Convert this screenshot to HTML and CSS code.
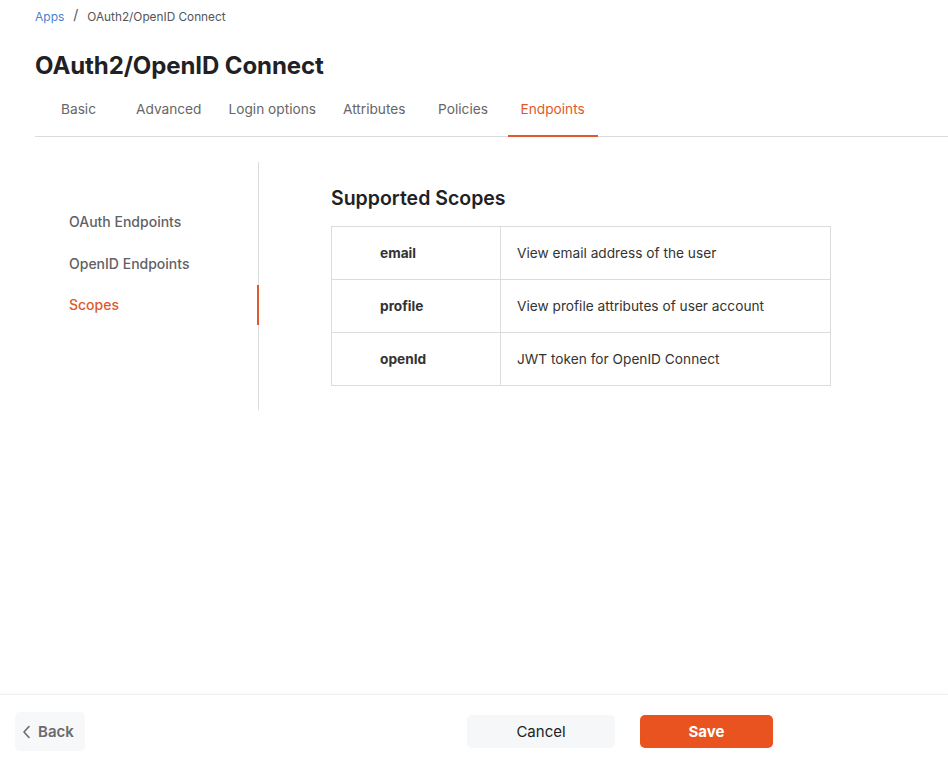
FILE: index.html
```html
<!DOCTYPE html>
<html lang="en">
<head>
<meta charset="utf-8">
<title>OAuth2/OpenID Connect</title>
<link rel="stylesheet" href="styles.css">
</head>
<body>
<div class="page">
  <main class="main">
    <nav class="breadcrumb">
      <a class="crumb-link" href="#">Apps</a>
      <span class="crumb-sep">/</span>
      <span class="crumb-current">OAuth2/OpenID Connect</span>
    </nav>
    <h1 class="title">OAuth2/OpenID Connect</h1>
    <div class="tabs">
      <div class="tab">Basic</div>
      <div class="tab">Advanced</div>
      <div class="tab">Login options</div>
      <div class="tab">Attributes</div>
      <div class="tab">Policies</div>
      <div class="tab tab-active">Endpoints</div>
    </div>
    <div class="body">
      <aside class="sidenav">
        <div class="side-item">OAuth Endpoints</div>
        <div class="side-item">OpenID Endpoints</div>
        <div class="side-item side-active">Scopes</div>
      </aside>
      <section class="content">
        <h2 class="section-title">Supported Scopes</h2>
        <table class="scopes">
          <tr><td class="scope-name">email</td><td class="scope-desc">View email address of the user</td></tr>
          <tr><td class="scope-name">profile</td><td class="scope-desc">View profile attributes of user account</td></tr>
          <tr><td class="scope-name">openId</td><td class="scope-desc">JWT token for OpenID Connect</td></tr>
        </table>
      </section>
    </div>
  </main>
  <footer class="footer">
    <button class="btn-back">
      <svg class="back-icon" width="10" height="14" viewBox="0 0 10 14"><path d="M7 1.5 L2 7 L7 12.5" fill="none" stroke="#6b6b6b" stroke-width="1.6" stroke-linecap="round" stroke-linejoin="round"/></svg>
      Back
    </button>
    <div class="footer-actions">
      <button class="btn-cancel">Cancel</button>
      <button class="btn-save">Save</button>
    </div>
  </footer>
</div>
</body>
</html>
```
FILE: styles.css
```css
* { box-sizing: border-box; }
html, body { margin: 0; padding: 0; }
body {
  font-family: Inter, "Liberation Sans", sans-serif;
  color: #222;
  background: #fff;
}
.page {
  height: 762px;
  display: flex;
  flex-direction: column;
}
.main {
  flex: 1;
  padding-left: 35px;
}
.breadcrumb {
  display: flex;
  align-items: center;
  height: 33px;
  font-size: 12px;
}
.crumb-link {
  color: #4a7fd0;
  text-decoration: none;
  font-size: 12px;
}
.crumb-sep {
  color: #555;
  margin: 0 9px 0 9px;
  font-size: 14px;
  position: relative;
  top: -2px;
}
.crumb-current {
  color: #555;
  font-size: 11.8px;
}
.title {
  margin: 0;
  margin-top: 19px;
  font-size: 24px;
  font-weight: 700;
  color: #1f2125;
  line-height: 28px;
  letter-spacing: -0.1px;
}
.tabs {
  display: flex;
  gap: 1px;
  margin-top: 19px;
  border-bottom: 1px solid #dcdcdc;
  height: 38px;
}
.tab {
  min-width: 87px;
  padding: 0 13px;
  text-align: center;
  font-size: 13.7px;
  color: #666;
  line-height: 20px;
  border-bottom: 2px solid transparent;
  height: 38px;
}
.tab-active {
  color: #de5a2c;
  border-bottom: 2.5px solid #de5a2c;
}
.body {
  display: flex;
  padding-top: 25px;
}
.sidenav {
  width: 224px;
  height: 248px;
  border-right: 1px solid #dcdcdc;
  padding-top: 40px;
  padding-left: 34px;
}
.side-item {
  font-size: 14px;
  font-weight: 500;
  color: #5f6165;
  height: 41.5px;
  line-height: 40px;
  position: relative;
}
.side-active {
  color: #de5a2c;
}
.side-active::after {
  content: "";
  position: absolute;
  right: 0;
  top: 0;
  width: 2.5px;
  height: 40px;
  background: #de5a2c;
  margin-right: -1px;
}
.content {
  padding-left: 72px;
  padding-top: 24px;
}
.section-title {
  margin: 0 0 16px 0;
  font-size: 19.5px;
  font-weight: 600;
  color: #1f2125;
  line-height: 24px;
}
.scopes {
  border-collapse: collapse;
  width: 500px;
}
.scopes td {
  border: 1px solid #dcdcdc;
  height: 53px;
  font-size: 13.7px;
  color: #333;
}
.scope-name {
  width: 169px;
  padding-left: 48px;
  font-weight: 700;
  color: #222;
}
.scope-desc {
  padding-left: 16px;
}
.footer {
  height: 68px;
  border-top: 1px solid #f1f1f1;
  box-shadow: 0 -1px 3px rgba(0,0,0,0.03);
  display: flex;
  align-items: center;
  justify-content: space-between;
  padding-top: 6px;
  padding-left: 15px;
  padding-right: 175px;
}
button {
  font-family: Inter, "Liberation Sans", sans-serif;
  border: none;
  cursor: pointer;
}
.btn-back {
  width: 70px;
  height: 39px;
  background: #f7f8f9;
  border-radius: 5px;
  color: #6b6b6b;
  font-size: 15px;
  font-weight: 600;
  display: flex;
  align-items: center;
  justify-content: center;
  gap: 6px;
  padding: 0 6px 0 2px;
}
.back-icon { flex: none; }
.footer-actions {
  display: flex;
  gap: 25px;
}
.btn-cancel {
  width: 148px;
  height: 33px;
  background: #f6f7f8;
  border-radius: 5px;
  font-size: 15px;
  color: #222;
}
.btn-save {
  width: 133px;
  height: 33px;
  background: #e9531f;
  border-radius: 5px;
  font-size: 15px;
  font-weight: 700;
  color: #fff;
}
```
